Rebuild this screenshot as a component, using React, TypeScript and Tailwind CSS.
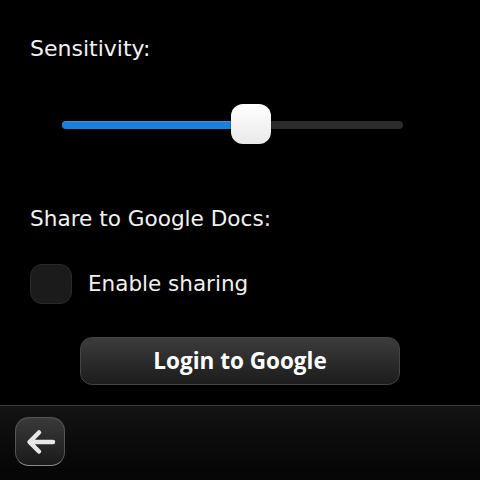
import React from "react";

export default function App() {
  return (
    <div
      className="w-[480px] h-[480px] bg-black flex flex-col overflow-hidden text-white"
      style={{ fontFamily: '"DejaVu Sans", "Open Sans", sans-serif' }}
    >
      <div className="h-[405px] flex flex-col">
        <div className="pl-[30px] pt-[35px] text-[22px] leading-[28px] text-[#f2f2f2]">Sensitivity:</div>
        <div className="pl-[62px] pt-[42px] h-[82px] flex items-end">
          <div className="h-[40px] flex items-center">
            <div className="relative w-[341px] h-[8px] rounded-full bg-[#2b2b2b]">
              <div className="absolute left-0 top-0 h-[8px] w-[175px] rounded-l-full bg-[#1a80dc] border-t border-[#3a98ea]" />
              <div className="absolute left-[169px] top-[-17px] w-[40px] h-[40px] rounded-[12px] bg-gradient-to-b from-[#ffffff] to-[#e9e9e9] shadow-[0_1px_2px_rgba(0,0,0,0.6)]" />
            </div>
          </div>
        </div>
        <div className="pl-[30px] pt-[60px] text-[21.6px] leading-[28px] text-[#f2f2f2]">Share to Google Docs:</div>
        <div className="pl-[30px] pt-[31px] flex items-center">
          <div className="w-[42px] h-[40px] rounded-[12px] bg-[#1b1b1b] border border-[#2a2a2a]" />
          <span className="ml-[16px] text-[21.5px] leading-[28px] text-[#f2f2f2]">Enable sharing</span>
        </div>
        <div className="pl-[80px] pt-[33px]">
          <div
            className="w-[320px] h-[48px] rounded-[12px] bg-gradient-to-b from-[#3c3c3c] to-[#1c1c1c] border border-[#444] flex items-center justify-center"
            style={{ fontFamily: '"Open Sans", "DejaVu Sans", sans-serif' }}
          >
            <span className="text-[22.5px] font-bold text-white">Login to Google</span>
          </div>
        </div>
      </div>
      <div className="h-[75px] border-t border-[#3a3a3a] bg-gradient-to-b from-[#131313] to-[#050505] flex items-start pt-[11px] pl-[15px]">
        <div className="w-[50px] h-[49px] rounded-[14px] bg-gradient-to-b from-[#3a3a3a] to-[#1a1a1a] border border-[#555] border-b-[#8a8a8a] flex items-center justify-center">
          <svg width="32" height="28" viewBox="0 0 32 28">
            <path d="M29 14 H6 M15 4.5 L5.5 14 L15 23.5" stroke="#e6e6e6" strokeWidth="4.5" fill="none" strokeLinecap="round" strokeLinejoin="round" />
          </svg>
        </div>
      </div>
    </div>
  );
}
